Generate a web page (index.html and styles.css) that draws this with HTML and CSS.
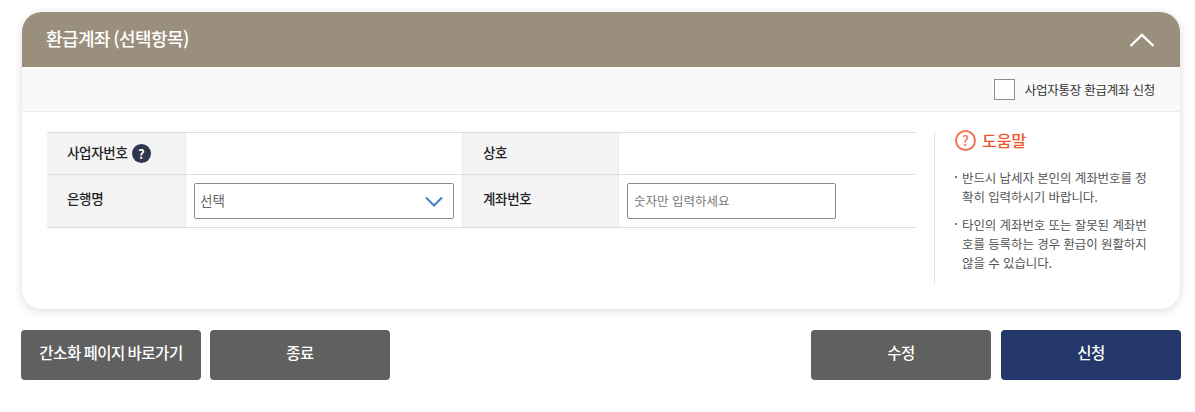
FILE: index.html
```html
<!DOCTYPE html>
<html lang="ko">
<head>
    <meta charset="UTF-8">
    <meta name="viewport" content="width=device-width, initial-scale=1.0">
    <title>환급계좌</title>
    <link rel="stylesheet" href="styles.css">
</head>
<body>
    <section class="card">
        <header class="card-head">
            <h2 class="card-title">환급계좌 (선택항목)</h2>
            <svg class="head-arrow" width="26" height="14" viewBox="0 0 26 14">
                <path d="M1.5 13 L13 2 L24.5 13" fill="none" stroke="#fff" stroke-width="2.4"/>
            </svg>
        </header>
        <div class="check-bar">
            <label class="check-label">
                <span class="check-box"></span>
                <span>사업자통장 환급계좌 신청</span>
            </label>
        </div>
        <div class="card-body">
            <div class="form-table">
                <div class="cell th row-one">사업자번호 <span class="q-badge">?</span></div>
                <div class="cell row-one"></div>
                <div class="cell th row-one">상호</div>
                <div class="cell last row-one"></div>
                <div class="cell th row-two">은행명</div>
                <div class="cell">
                    <div class="select-box">
                        <span>선택</span>
                        <svg width="18" height="11" viewBox="0 0 18 11">
                            <path d="M1 1.5 L9 9.5 L17 1.5" fill="none" stroke="#4a7cc4" stroke-width="2"/>
                        </svg>
                    </div>
                </div>
                <div class="cell th row-two">계좌번호</div>
                <div class="cell last">
                    <input class="text-input" type="text" placeholder="숫자만 입력하세요">
                </div>
            </div>
            <aside class="help">
                <h3 class="help-title">
                    <span class="help-icon">?</span>
                    도움말
                </h3>
                <ul class="help-list">
                    <li>반드시 납세자 본인의 계좌번호를 정확히 입력하시기 바랍니다.</li>
                    <li>타인의 계좌번호 또는 잘못된 계좌번호를 등록하는 경우 환급이 원활하지 않을 수 있습니다.</li>
                </ul>
            </aside>
        </div>
    </section>
    <div class="actions">
        <div class="btn-group">
            <button class="btn">간소화 페이지 바로가기</button>
            <button class="btn">종료</button>
        </div>
        <div class="btn-group wide">
            <button class="btn">수정</button>
            <button class="btn primary">신청</button>
        </div>
    </div>
</body>
</html>
```

FILE: styles.css
```css
* {
    box-sizing: border-box;
}
body {
    margin: 0;
    padding: 12px 14px 0 21px;
    background: #fff;
    color: #333;
    font-family: "Noto Sans CJK KR", "Noto Sans", sans-serif;
    overflow: hidden;
}
.card {
    width: 1158px;
    height: 297px;
    margin-left: 1px;
    background: #fff;
    border-radius: 20px;
    box-shadow: 0 2px 10px rgba(0, 0, 0, 0.14);
    overflow: hidden;
}
.card-head {
    height: 55px;
    padding: 0 25px 0 24px;
    background: #9a8f7d;
    display: flex;
    align-items: center;
    justify-content: space-between;
}
.card-title {
    margin: 0 0 3px;
    color: #fff;
    font-size: 18px;
    font-weight: 500;
    letter-spacing: -0.6px;
    word-spacing: -1px;
}
.head-arrow {
    margin-top: 1px;
}
.check-bar {
    height: 45px;
    padding-right: 25px;
    background: #f9f9f9;
    border-bottom: 1px solid #eaeaea;
    display: flex;
    justify-content: flex-end;
    align-items: center;
}
.check-label {
    display: flex;
    align-items: center;
    gap: 10px;
    font-size: 12.5px;
    letter-spacing: -0.25px;
}
.check-box {
    width: 21px;
    height: 21px;
    background: #fff;
    border: 1px solid #8f8f8f;
}
.card-body {
    display: flex;
    padding: 20px 25px 0;
}
.form-table {
    width: 868px;
    height: 96px;
    display: grid;
    grid-template-columns: 139px 277px 156px 296px;
    grid-template-rows: 42px 52px;
    border-top: 1px solid #ddd;
    border-bottom: 1px solid #ddd;
    font-size: 13.5px;
}
.cell {
    padding: 0 8px;
    display: flex;
    align-items: center;
    border-right: 1px solid #e8e8e8;
}
.row-one {
    border-bottom: 1px solid #ddd;
}
.cell.last {
    border-right: 0;
}
.th {
    padding: 0 0 3px 20px;
    gap: 4px;
    background: #f4f4f4;
    color: #222;
    font-weight: 500;
    letter-spacing: -0.3px;
}
.th.row-two {
    padding-bottom: 6px;
}
.q-badge {
    width: 19px;
    height: 19px;
    margin-top: 3px;
    border-radius: 50%;
    background: #2e3650;
    color: #fff;
    font-size: 13px;
    font-weight: 700;
    display: flex;
    align-items: center;
    justify-content: center;
}
.select-box {
    width: 260px;
    height: 36px;
    padding: 0 10px 0 5px;
    background: #fff;
    border: 1px solid #8c8c8c;
    border-radius: 2px;
    color: #666;
    font-size: 13.5px;
    display: flex;
    align-items: center;
    justify-content: space-between;
}
.select-box span {
    margin-bottom: 2px;
}
.text-input {
    width: 209px;
    height: 36px;
    padding: 0 6px 2px;
    border: 1px solid #8c8c8c;
    border-radius: 2px;
    font-family: inherit;
    font-size: 12.5px;
}
.text-input::placeholder {
    color: #777;
}
.help {
    width: 222px;
    height: 153px;
    margin-left: 19px;
    padding-left: 20px;
    border-left: 1px solid #e4e4e4;
}
.help-title {
    margin: -2px 0 18px;
    display: flex;
    align-items: center;
    gap: 6px;
    height: 20px;
    color: #f0562a;
    font-size: 16px;
    font-weight: 500;
}
.help-icon {
    width: 21px;
    height: 21px;
    border: 2px solid #ee7550;
    border-radius: 50%;
    color: #ee7550;
    font-size: 14px;
    display: flex;
    align-items: center;
    justify-content: center;
}
.help-list {
    margin: 0;
    padding: 0;
    list-style: none;
    font-size: 12.5px;
    line-height: 19px;
    color: #555;
    letter-spacing: -0.1px;
}
.help-list li {
    position: relative;
    padding-left: 7px;
    margin-bottom: 9px;
    word-break: break-all;
}
.help-list li::before {
    content: "";
    position: absolute;
    left: 0;
    top: 8px;
    width: 2px;
    height: 2px;
    background: #777;
}
.actions {
    display: flex;
    justify-content: space-between;
    margin-top: 21px;
    width: 1160px;
}
.btn-group {
    display: flex;
    gap: 9px;
}
.btn-group.wide {
    gap: 10px;
}
.btn {
    width: 180px;
    height: 50px;
    padding-bottom: 7px;
    border: none;
    border-radius: 4px;
    background: #606060;
    color: #fff;
    font-family: inherit;
    font-size: 15.5px;
    font-weight: 500;
    letter-spacing: -0.5px;
    word-spacing: -1px;
    cursor: pointer;
}
.btn.primary {
    background: #23376b;
}
```
